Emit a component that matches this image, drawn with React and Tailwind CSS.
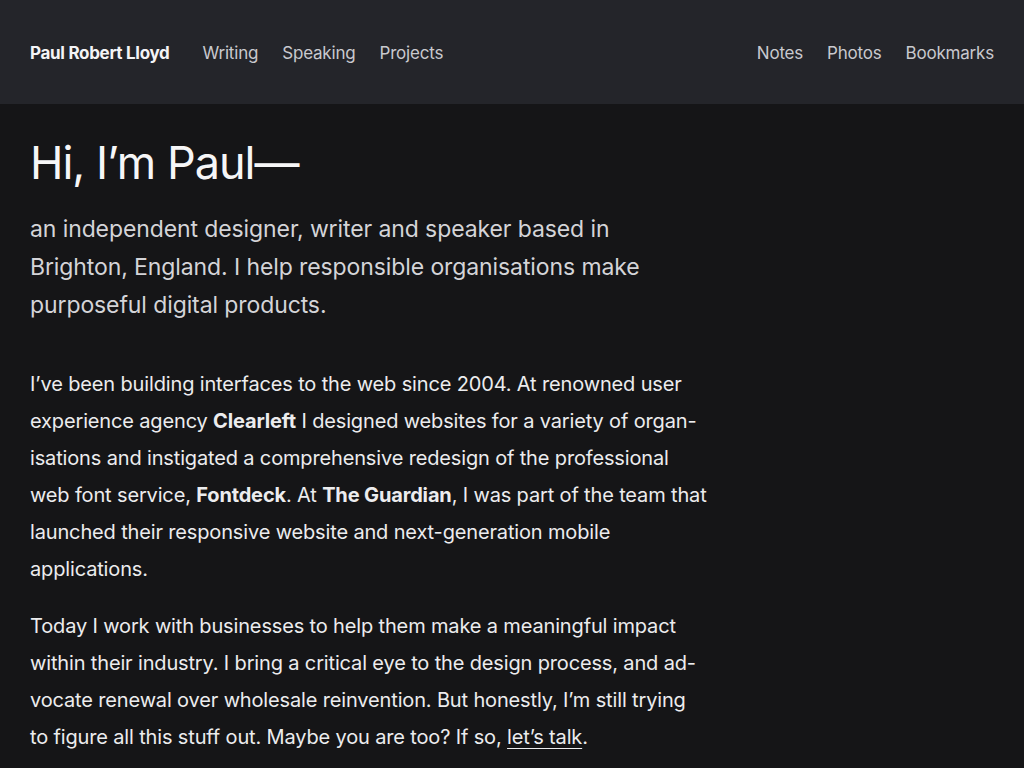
import React from 'react';

const leftLinks = ['Writing', 'Speaking', 'Projects'];
const rightLinks = ['Notes', 'Photos', 'Bookmarks'];

export default function App() {
    return (
        <div className="min-h-screen bg-[#151517] text-[#ececee]" style={{ fontFamily: 'Inter, Roboto, "Noto Sans", sans-serif' }}>
            <header className="h-[104px] bg-[#24252a] px-[30px] pt-[3px] flex items-center justify-between">
                <nav className="flex items-center">
                    <a className="text-[17px] font-bold text-[#f4f4f6] tracking-[-0.3px] mr-[33px]">Paul Robert Lloyd</a>
                    <ul className="flex gap-[24px] text-[17px] text-[#c9c9ce] tracking-[-0.2px]">
                        {leftLinks.map(l => <li key={l}>{l}</li>)}
                    </ul>
                </nav>
                <ul className="flex gap-[24px] text-[17px] text-[#c9c9ce] tracking-[-0.2px]">
                    {rightLinks.map(l => <li key={l}>{l}</li>)}
                </ul>
            </header>

            <main className="px-[30px] pt-[31px]">
                <h1 className="text-[45px] leading-[56px] text-[#f6f6f7] tracking-[-1px]">Hi, I’m Paul—</h1>
                <p className="mt-[19px] text-[23px] leading-[38px] text-[#d4d4d8] tracking-[-0.1px]">
                    an independent designer, writer and speaker based in<br />
                    Brighton, England. I help responsible organisations make<br />
                    purposeful digital products.
                </p>

                <div className="mt-[42px] text-[20px] leading-[37px] text-[#ececee] tracking-[-0.15px] space-y-[20px]">
                    <p>
                        I’ve been building interfaces to the web since 2004. At renowned user<br />
                        experience agency <b>Clearleft</b> I designed websites for a variety of organ-<br />
                        isations and instigated a comprehensive redesign of the professional<br />
                        web font service, <b>Fontdeck</b>. At <b>The Guardian</b>, I was part of the team that<br />
                        launched their responsive website and next-generation mobile<br />
                        applications.
                    </p>
                    <p>
                        Today I work with businesses to help them make a meaningful impact<br />
                        within their industry. I bring a critical eye to the design process, and ad-<br />
                        vocate renewal over wholesale reinvention. But honestly, I’m still trying<br />
                        to figure all this stuff out. Maybe you are too? If so, <a className="underline underline-offset-[4px] decoration-1">let’s talk</a>.
                    </p>
                </div>
            </main>
        </div>
    );
}
